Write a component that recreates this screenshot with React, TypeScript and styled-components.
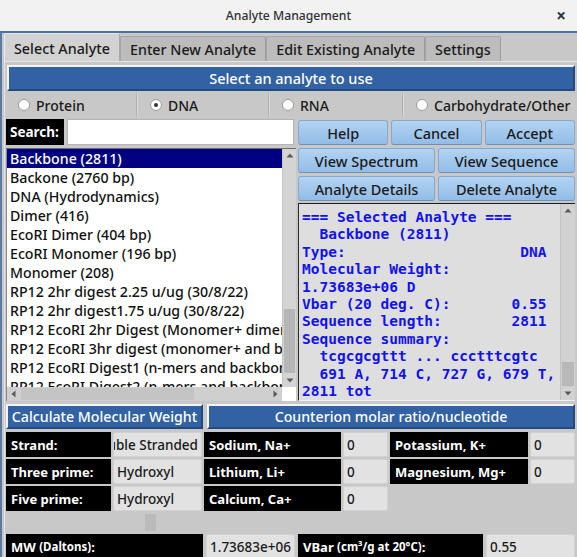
import styled, { createGlobalStyle } from "styled-components";

const GlobalStyle = createGlobalStyle`
  html, body { margin: 0; padding: 0; }
  body {
    width: 577px;
    height: 557px;
    overflow: hidden;
    background: #c8c8c8;
    font-family: "Noto Sans", "DejaVu Sans", sans-serif;
    font-size: 13px;
    color: #1a1a1a;
  }
  * { box-sizing: border-box; }
`;

const tabs = ["Select Analyte", "Enter New Analyte", "Edit Existing Analyte", "Settings"];
const types = ["Protein", "DNA", "RNA", "Carbohydrate/Other"];

const analytes = [
  "Backbone (2811)",
  "Backone (2760 bp)",
  "DNA (Hydrodynamics)",
  "Dimer (416)",
  "EcoRI Dimer (404 bp)",
  "EcoRI Monomer (196 bp)",
  "Monomer (208)",
  "RP12 2hr digest 2.25 u/ug (30/8/22)",
  "RP12 2hr digest1.75 u/ug (30/8/22)",
  "RP12 EcoRI 2hr Digest (Monomer+ dimer+ backbone)",
  "RP12 EcoRI 3hr digest (monomer+ and backbone)",
  "RP12 EcoRI Digest1 (n-mers and backbone)",
  "RP12 EcoRI Digest2 (n-mers and backbone)",
];

const details = `=== Selected Analyte ===
  Backbone (2811)
Type:                    DNA
Molecular Weight:
1.73683e+06 D
Vbar (20 deg. C):       0.55
Sequence length:        2811
Sequence summary:
  tcgcgcgttt ... ccctttcgtc
  691 A, 714 C, 727 G, 679 T,
2811 tot`;

type Dir = "up" | "down" | "left" | "right";

const Arrow = ({ dir }: { dir: Dir }) => {
  const pts = {
    up: "0.5,5.5 4,1.5 7.5,5.5",
    down: "0.5,2.5 4,6.5 7.5,2.5",
    left: "5.5,0.5 1.5,4 5.5,7.5",
    right: "2.5,0.5 6.5,4 2.5,7.5",
  }[dir];
  return (
    <svg width="8" height="8" viewBox="0 0 8 8">
      <polygon points={pts} fill="#5a5a5a" />
    </svg>
  );
};

const App = () => {
  return (
    <>
      <GlobalStyle />
      <Window>
        <TitleBar>
          <span />
          <Title>Analyte Management</Title>
          <Close>×</Close>
        </TitleBar>
        <Frame>
          <TabBar>
            {tabs.map((t, i) => (
              <Tab key={t} $active={i === 0}>
                {t}
              </Tab>
            ))}
          </TabBar>
          <Pane>
            <Banner>Select an analyte to use</Banner>
            <RadioRow>
              {types.map((t) => (
                <RadioCell key={t}>
                  <RadioDot $checked={t === "DNA"} />
                  {t}
                </RadioCell>
              ))}
            </RadioRow>

            <Middle>
              <LeftCol>
                <SearchRow>
                  <SearchLabel>Search:</SearchLabel>
                  <SearchInput />
                </SearchRow>
                <ListBox>
                  <Items>
                    {analytes.map((a, i) => (
                      <Item key={a} $selected={i === 0}>
                        {a}
                      </Item>
                    ))}
                  </Items>
                  <VScroll>
                    <ArrowBox>
                      <Arrow dir="up" />
                    </ArrowBox>
                    <Track>
                      <VThumb />
                    </Track>
                    <ArrowBox>
                      <Arrow dir="down" />
                    </ArrowBox>
                  </VScroll>
                  <HScroll>
                    <ArrowBox>
                      <Arrow dir="left" />
                    </ArrowBox>
                    <HTrack>
                      <HThumb />
                    </HTrack>
                    <ArrowBox>
                      <Arrow dir="right" />
                    </ArrowBox>
                  </HScroll>
                  <Corner />
                </ListBox>
              </LeftCol>

              <RightCol>
                <ButtonRow $cols={3}>
                  <Button>Help</Button>
                  <Button>Cancel</Button>
                  <Button>Accept</Button>
                </ButtonRow>
                <ButtonRow $cols={2}>
                  <Button>View Spectrum</Button>
                  <Button>View Sequence</Button>
                </ButtonRow>
                <ButtonRow $cols={2}>
                  <Button>Analyte Details</Button>
                  <Button>Delete Analyte</Button>
                </ButtonRow>
                <InfoPanel>
                  <InfoText>{details}</InfoText>
                  <PanelScroll>
                    <ArrowBox>
                      <Arrow dir="up" />
                    </ArrowBox>
                    <Track>
                      <PanelThumb />
                    </Track>
                    <ArrowBox>
                      <Arrow dir="down" />
                    </ArrowBox>
                  </PanelScroll>
                </InfoPanel>
              </RightCol>
            </Middle>

            <HeaderRow>
              <SectionHeader>Calculate Molecular Weight</SectionHeader>
              <SectionHeader>Counterion molar ratio/nucleotide</SectionHeader>
            </HeaderRow>

            <FieldGrid>
              <Label>Strand:</Label>
              <Value $alignEnd>Double Stranded</Value>
              <Label>Sodium, Na+</Label>
              <Value>0</Value>
              <Label>Potassium, K+</Label>
              <Value>0</Value>

              <Label>Three prime:</Label>
              <Value>Hydroxyl</Value>
              <Label>Lithium, Li+</Label>
              <Value>0</Value>
              <Label>Magnesium, Mg+</Label>
              <Value>0</Value>

              <Label>Five prime:</Label>
              <Value>Hydroxyl</Value>
              <Label>Calcium, Ca+</Label>
              <Value>0</Value>
            </FieldGrid>

            <Spacer>
              <Handle />
            </Spacer>

            <ResultRow>
              <Label>
                MW&nbsp;<Small>(Daltons)</Small>:
              </Label>
              <Value>1.73683e+06</Value>
              <Label>
                VBar&nbsp;<Small>(cm³/g at 20°C)</Small>:
              </Label>
              <Value>0.55</Value>
            </ResultRow>
          </Pane>
        </Frame>
      </Window>
    </>
  );
};

export default App;

const Window = styled.div`
  width: 577px;
  height: 557px;
  display: flex;
  flex-direction: column;
  overflow: hidden;
`;

const TitleBar = styled.div`
  height: 31px;
  flex: none;
  display: grid;
  grid-template-columns: 40px 1fr 40px;
  align-items: center;
  background: #f2f2f2;
`;

const Title = styled.div`
  text-align: center;
  color: #2e3436;
  font-size: 12.2px;
  font-weight: 500;
`;

const Close = styled.div`
  text-align: center;
  padding-left: 8px;
  font-size: 17px;
  font-weight: bold;
  color: #2e3436;
`;

const Frame = styled.div`
  flex: 1;
  display: flex;
  flex-direction: column;
  border-top: 2px solid #4872a8;
  border-left: 2px solid #5a7aa6;
  padding-left: 2px;
  background: #c8c8c8;
  min-height: 0;
`;

const TabBar = styled.div`
  height: 29px;
  flex: none;
  display: flex;
  align-items: flex-end;
`;

const Tab = styled.div<{ $active?: boolean }>`
  height: ${(p) => (p.$active ? "29px" : "26px")};
  padding: 0 ${(p) => (p.$active ? "9px" : "9px")};
  display: flex;
  align-items: center;
  font-size: 14.3px;
  font-weight: 500;
  color: #1a1a1a;
  background: ${(p) => (p.$active ? "#d2d2d2" : "#bcbcbc")};
  border: 1px solid ${(p) => (p.$active ? "#a8a8a8" : "#9c9c9c")};
  border-bottom: none;
  border-top-color: ${(p) => (p.$active ? "#e6e6e6" : "#a6a6a6")};
  border-left-color: ${(p) => (p.$active ? "#ececec" : "#a6a6a6")};
  border-radius: 2px 2px 0 0;
`;

const Pane = styled.div`
  flex: 1;
  display: flex;
  flex-direction: column;
  padding: 3px 2px 0 1px;
  border-left: 1px solid #e4e4e4;
  border-top: 1px solid #e4e4e4;
  margin-top: -1px;
  min-height: 0;
`;

const Banner = styled.div`
  height: 26px;
  flex: none;
  margin-left: 1px;
  display: flex;
  align-items: center;
  justify-content: center;
  background: #3262a3;
  color: #fff;
  font-size: 14.5px;
  font-weight: 500;
  border: 2px solid #234a80;
  border-top-color: #f4f4f4;
  border-left-color: #f4f4f4;
`;

const RadioRow = styled.div`
  margin-top: 2px;
  height: 24px;
  flex: none;
  display: grid;
  grid-template-columns: 131px 132px 134px 1fr;
`;

const RadioCell = styled.div`
  display: flex;
  align-items: center;
  gap: 6px;
  padding-left: 12px;
  font-size: 14px;
  font-weight: 500;
  border-right: 1px solid #b0b0b0;
  border-left: 1px solid #dadada;
  &:first-child {
    border-left: none;
  }
  &:last-child {
    border-right: none;
  }
`;

const RadioDot = styled.span<{ $checked?: boolean }>`
  width: 12px;
  height: 12px;
  flex: none;
  border-radius: 50%;
  background: #fff;
  border: 1px solid #9a9a9a;
  display: inline-flex;
  align-items: center;
  justify-content: center;
  &::after {
    content: "";
    width: 4px;
    height: 4px;
    border-radius: 50%;
    background: ${(p) => (p.$checked ? "#333" : "transparent")};
  }
`;

const Middle = styled.div`
  margin-top: 2px;
  height: 282px;
  flex: none;
  display: grid;
  grid-template-columns: 290px 1fr;
  column-gap: 2px;
`;

const LeftCol = styled.div`
  display: flex;
  flex-direction: column;
  gap: 3px;
  min-height: 0;
`;

const SearchRow = styled.div`
  height: 26px;
  flex: none;
  display: flex;
  gap: 3px;
`;

const SearchLabel = styled.div`
  width: 58px;
  display: flex;
  align-items: center;
  padding-left: 4px;
  background: #000;
  color: #fff;
  font-weight: bold;
  font-size: 13.5px;
`;

const SearchInput = styled.div`
  flex: 1;
  margin-right: 2px;
  background: #fff;
  border: 1px solid #b4b4b4;
`;

const ListBox = styled.div`
  flex: 1;
  display: grid;
  grid-template-columns: 1fr 14px;
  grid-template-rows: 1fr 14px;
  background: #fff;
  border-top: 1px solid #6e6e6e;
  border-left: 1px solid #8a8a8a;
  min-height: 0;
`;

const Items = styled.div`
  overflow: hidden;
`;

const Item = styled.div<{ $selected?: boolean }>`
  height: 19px;
  line-height: 19px;
  padding-left: 3px;
  white-space: nowrap;
  font-size: 14.2px;
  font-weight: 500;
  color: ${(p) => (p.$selected ? "#fff" : "#111")};
  background: ${(p) => (p.$selected ? "#000080" : "transparent")};
`;

const VScroll = styled.div`
  display: grid;
  grid-template-rows: 14px 1fr 14px;
  background: #d4d4d4;
  border-left: 1px solid #c4c4c4;
`;

const ArrowBox = styled.div`
  display: flex;
  align-items: center;
  justify-content: center;
`;

const Track = styled.div`
  display: flex;
  flex-direction: column;
  justify-content: flex-end;
`;

const VThumb = styled.div`
  height: 64px;
  margin: 0 1px;
  background: #b6b6b6;
`;

const HScroll = styled.div`
  display: grid;
  grid-template-columns: 14px 1fr 14px;
  background: #cfcfcf;
`;

const HTrack = styled.div`
  display: flex;
  align-items: stretch;
  padding: 1px 0;
`;

const HThumb = styled.div`
  width: 70%;
  background: #c4c4c4;
`;

const Corner = styled.div`
  background: #fff;
`;

const RightCol = styled.div`
  display: flex;
  flex-direction: column;
  gap: 3px;
  padding-top: 1px;
  min-height: 0;
`;

const ButtonRow = styled.div<{ $cols: number }>`
  height: 25px;
  flex: none;
  display: grid;
  grid-template-columns: repeat(${(p) => p.$cols}, 1fr);
  gap: 3px;
`;

const Button = styled.div`
  display: flex;
  align-items: center;
  justify-content: center;
  font-size: 14.5px;
  font-weight: 500;
  color: #1a1a1a;
  background: linear-gradient(#b2d4f4, #93bce6);
  border: 1px solid #86a9cc;
  border-bottom-color: #6e90b4;
  border-radius: 3px;
`;

const InfoPanel = styled.div`
  flex: 1;
  margin-top: -1px;
  display: grid;
  grid-template-columns: 1fr 15px;
  background: #dedede;
  border-top: 1px solid #1e1e1e;
  border-left: 1px solid #2a2a2a;
  border-bottom: 1px solid #f0f0f0;
  min-height: 0;
`;

const InfoText = styled.pre`
  margin: 0;
  padding: 5px 0 0 3px;
  overflow: hidden;
  font-family: "DejaVu Sans Mono", "Liberation Mono", monospace;
  font-weight: bold;
  font-size: 14.5px;
  line-height: 17.4px;
  color: #1212ea;
`;

const PanelScroll = styled.div`
  display: grid;
  grid-template-rows: 14px 1fr 14px;
  background: #d2d2d2;
  border-left: 1px solid #c2c2c2;
`;

const PanelThumb = styled.div`
  height: 24px;
  margin: 0 1px;
  background: #b8b8b8;
`;

const HeaderRow = styled.div`
  margin-top: 3px;
  height: 25px;
  flex: none;
  display: grid;
  grid-template-columns: 197px 1fr;
  column-gap: 4px;
`;

const SectionHeader = styled.div`
  display: flex;
  align-items: center;
  justify-content: center;
  background: #3262a3;
  color: #fff;
  font-size: 14.2px;
  font-weight: 500;
  white-space: nowrap;
  border: 2px solid #234a80;
  border-top-color: #f4f4f4;
  border-left-color: #f4f4f4;
`;

const FieldGrid = styled.div`
  margin-top: 3px;
  flex: none;
  display: grid;
  grid-template-columns: 105px 89px 137px 45px 138px 1fr;
  grid-auto-rows: 25px;
  column-gap: 2px;
  row-gap: 2px;
`;

const Label = styled.div`
  display: flex;
  align-items: center;
  padding-left: 5px;
  background: #000;
  color: #fff;
  font-weight: bold;
  font-size: 13px;
  white-space: nowrap;
  overflow: hidden;
`;

const Small = styled.span`
  font-size: 11.5px;
`;

const Value = styled.div<{ $alignEnd?: boolean }>`
  display: flex;
  align-items: center;
  justify-content: ${(p) => (p.$alignEnd ? "flex-end" : "flex-start")};
  padding: 0 3px;
  background: #e2e2e2;
  border: 1px solid #d2d2d2;
  border-radius: 2px;
  color: #1a1a1a;
  font-size: 13.5px;
  font-weight: 500;
  white-space: nowrap;
  overflow: hidden;
`;

const Spacer = styled.div`
  height: 23px;
  flex: none;
  display: flex;
  align-items: center;
  padding-left: 139px;
`;

const Handle = styled.div`
  width: 11px;
  height: 17px;
  background: #bababa;
`;

const ResultRow = styled.div`
  height: 25px;
  flex: none;
  display: grid;
  grid-template-columns: 197px 89px 185px 1fr;
  column-gap: 3px;
`;
